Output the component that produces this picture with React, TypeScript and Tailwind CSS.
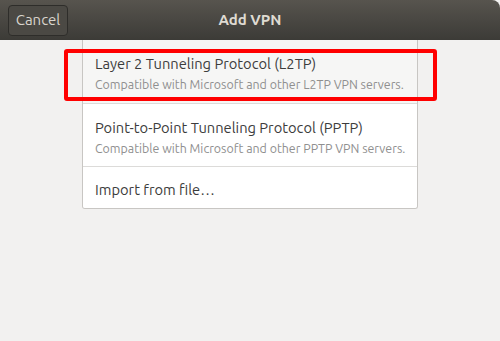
import React from "react";

const Row = ({
  title,
  sub,
  highlight = false,
  last = false,
  h,
}: {
  title: string;
  sub?: string;
  highlight?: boolean;
  last?: boolean;
  h: string;
}) => (
  <div
    className={`flex flex-col px-[12px] whitespace-nowrap ${h} ${
      highlight ? "bg-[#f6f6f5]" : "bg-white"
    } ${last ? "justify-center pt-[4px]" : "pt-[14px] border-b border-[#dcdbd9]"}`}
  >
    <div className="text-[14.7px] leading-[20px] text-[#3c3c3c]">{title}</div>
    {sub && <div className="text-[12.4px] leading-[18px] text-[#8f8f8f] mt-[1px]">{sub}</div>}
  </div>
);

export default function App() {
  return (
    <div className="relative w-[500px] h-[341px] overflow-hidden bg-[#f2f1f0] font-['Ubuntu','Noto_Sans',sans-serif]">
      {/* Header bar */}
      <div className="relative h-[40px] flex items-center rounded-tr-[8px] bg-gradient-to-b from-[#57544e] to-[#3c3b37]">
        <button className="ml-[8px] h-[31px] w-[60px] rounded-[4px] border border-[#2e2d2a] bg-[#4b4944] text-[15px] text-[#d9d5cd]">
          Cancel
        </button>
        <div className="absolute inset-0 flex items-center justify-center text-[15px] font-bold text-[#dfdbd2] pointer-events-none">
          Add VPN
        </div>
      </div>

      {/* List */}
      <div className="ml-[82px] w-[336px] border border-t-0 border-[#c8c6c3] rounded-b-[3px] overflow-hidden">
        <Row
          h="h-[64px]"
          highlight
          title="Layer 2 Tunneling Protocol (L2TP)"
          sub="Compatible with Microsoft and other L2TP VPN servers."
        />
        <Row
          h="h-[63px]"
          title="Point-to-Point Tunneling Protocol (PPTP)"
          sub="Compatible with Microsoft and other PPTP VPN servers."
        />
        <Row h="h-[41px]" last title="Import from file…" />
      </div>

      {/* Red annotation */}
      <div className="absolute left-[64px] top-[49px] w-[373px] h-[52px] border-4 border-[#ff0000] rounded-[3px]" />
    </div>
  );
}
